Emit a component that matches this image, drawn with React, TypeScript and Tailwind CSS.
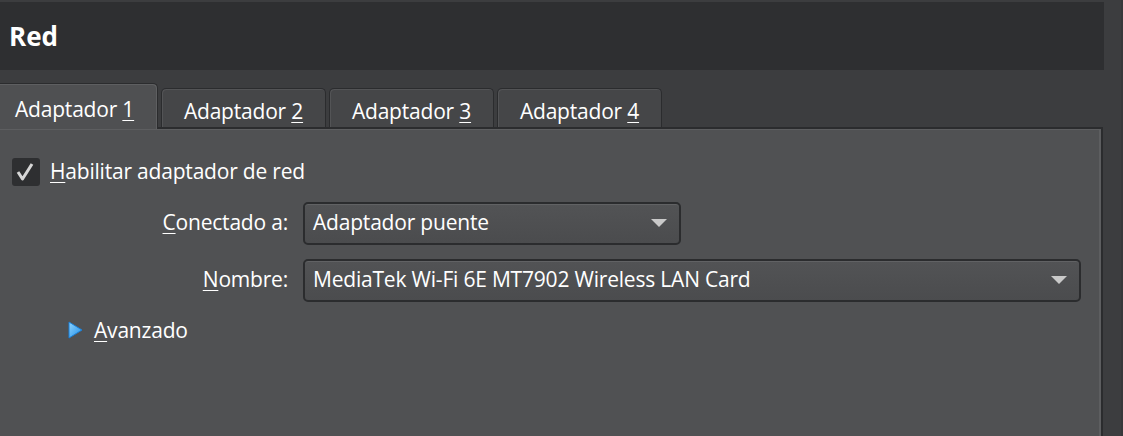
import { ReactNode } from "react";

const Mn = ({ children }: { children: ReactNode }) => (
  <span className="underline decoration-1 underline-offset-[3px]">{children}</span>
);

const Tab = ({ n, active }: { n: number; active?: boolean }) => {
  if (active) {
    return (
      <div className="relative z-10 -mb-[2px] h-[46px] w-[158px] pl-[15px] pt-[10px] bg-[#4f5052] border-t border-r border-[#2b2c2e] rounded-tr-[5px] shadow-[inset_-1px_1px_0_#5e5f61]">
        Adaptador <Mn>{n}</Mn>
      </div>
    );
  }
  return (
    <div className="h-[39px] w-[165px] pt-[7px] text-center bg-[#454648] border-t border-x border-[#2b2c2e] rounded-t-[5px] shadow-[inset_1px_1px_0_#535456]">
      Adaptador <Mn>{n}</Mn>
    </div>
  );
};

const Combo = ({ value, width }: { value: string; width: string }) => (
  <div
    className={`${width} h-[43px] flex items-center justify-between pl-[8px] pr-[12px] rounded-[5px] border-2 border-[#2b2c2e] bg-gradient-to-b from-[#525355] to-[#4b4c4e] shadow-[inset_0_1px_0_#616264]`}
  >
    <span>{value}</span>
    <svg width="16" height="8" viewBox="0 0 16 8">
      <path d="M0 0 L16 0 L8 8 Z" fill="#c9c9c9" />
    </svg>
  </div>
);

export default function App() {
  return (
    <div className="w-[1123px] h-[436px] overflow-hidden flex bg-[#3c3d3f] text-white text-[21px] tracking-[-0.2px] font-['Open_Sans','Noto_Sans',sans-serif]">
      <div className="w-[1104px] flex flex-col">
        {/* header */}
        <div className="mt-[2px] h-[68px] bg-[#2e2f31] flex items-center pl-[9px]">
          <span className="text-[26px] font-bold tracking-normal leading-none">Red</span>
        </div>

        {/* tabs */}
        <div className="mt-[13px] flex items-end gap-[3px] h-[44px]">
          <Tab n={1} active />
          <Tab n={2} />
          <Tab n={3} />
          <Tab n={4} />
        </div>

        {/* panel */}
        <div className="flex-1 w-[1103px] bg-[#505153] border-t-2 border-r-2 border-[#2b2c2e] shadow-[inset_-2px_1px_0_#5d5e60] flex flex-col">
          <div className="mt-[27px] ml-[12px] flex items-center gap-[10px]">
            <div className="w-[28px] h-[28px] rounded-[3px] bg-[#2e2f31] flex items-center justify-center">
              <svg width="20" height="18" viewBox="0 0 20 18">
                <path d="M2 9 L6.5 16 L16 1" fill="none" stroke="#d6d6d6" strokeWidth="3" strokeLinejoin="round" />
              </svg>
            </div>
            <span>
              <Mn>H</Mn>abilitar adaptador de red
            </span>
          </div>

          <div className="mt-[14px] flex flex-col gap-[14px]">
            <div className="flex items-center">
              <div className="w-[289px] text-right pr-[1px]">
                <Mn>C</Mn>onectado a:
              </div>
              <div className="ml-[14px]">
                <Combo value="Adaptador puente" width="w-[378px]" />
              </div>
            </div>
            <div className="flex items-center">
              <div className="w-[289px] text-right pr-[1px]">
                <Mn>N</Mn>ombre:
              </div>
              <div className="ml-[14px]">
                <Combo value="MediaTek Wi-Fi 6E MT7902 Wireless LAN Card" width="w-[778px]" />
              </div>
            </div>
          </div>

          <div className="mt-[13px] ml-[68px] flex items-center gap-[11px]">
            <svg width="15" height="18" viewBox="0 0 15 18">
              <defs>
                <linearGradient id="tri" x1="0" y1="0" x2="1" y2="1">
                  <stop offset="0" stopColor="#8fd4ff" />
                  <stop offset="1" stopColor="#1f8fe8" />
                </linearGradient>
              </defs>
              <path d="M1 1 L14 9 L1 17 Z" fill="url(#tri)" stroke="#1a7fd6" strokeWidth="1" strokeLinejoin="round" />
            </svg>
            <span>
              <Mn>A</Mn>vanzado
            </span>
          </div>
        </div>
      </div>
      <div className="flex-1 border-r-2 border-[#37383a]" />
    </div>
  );
}
